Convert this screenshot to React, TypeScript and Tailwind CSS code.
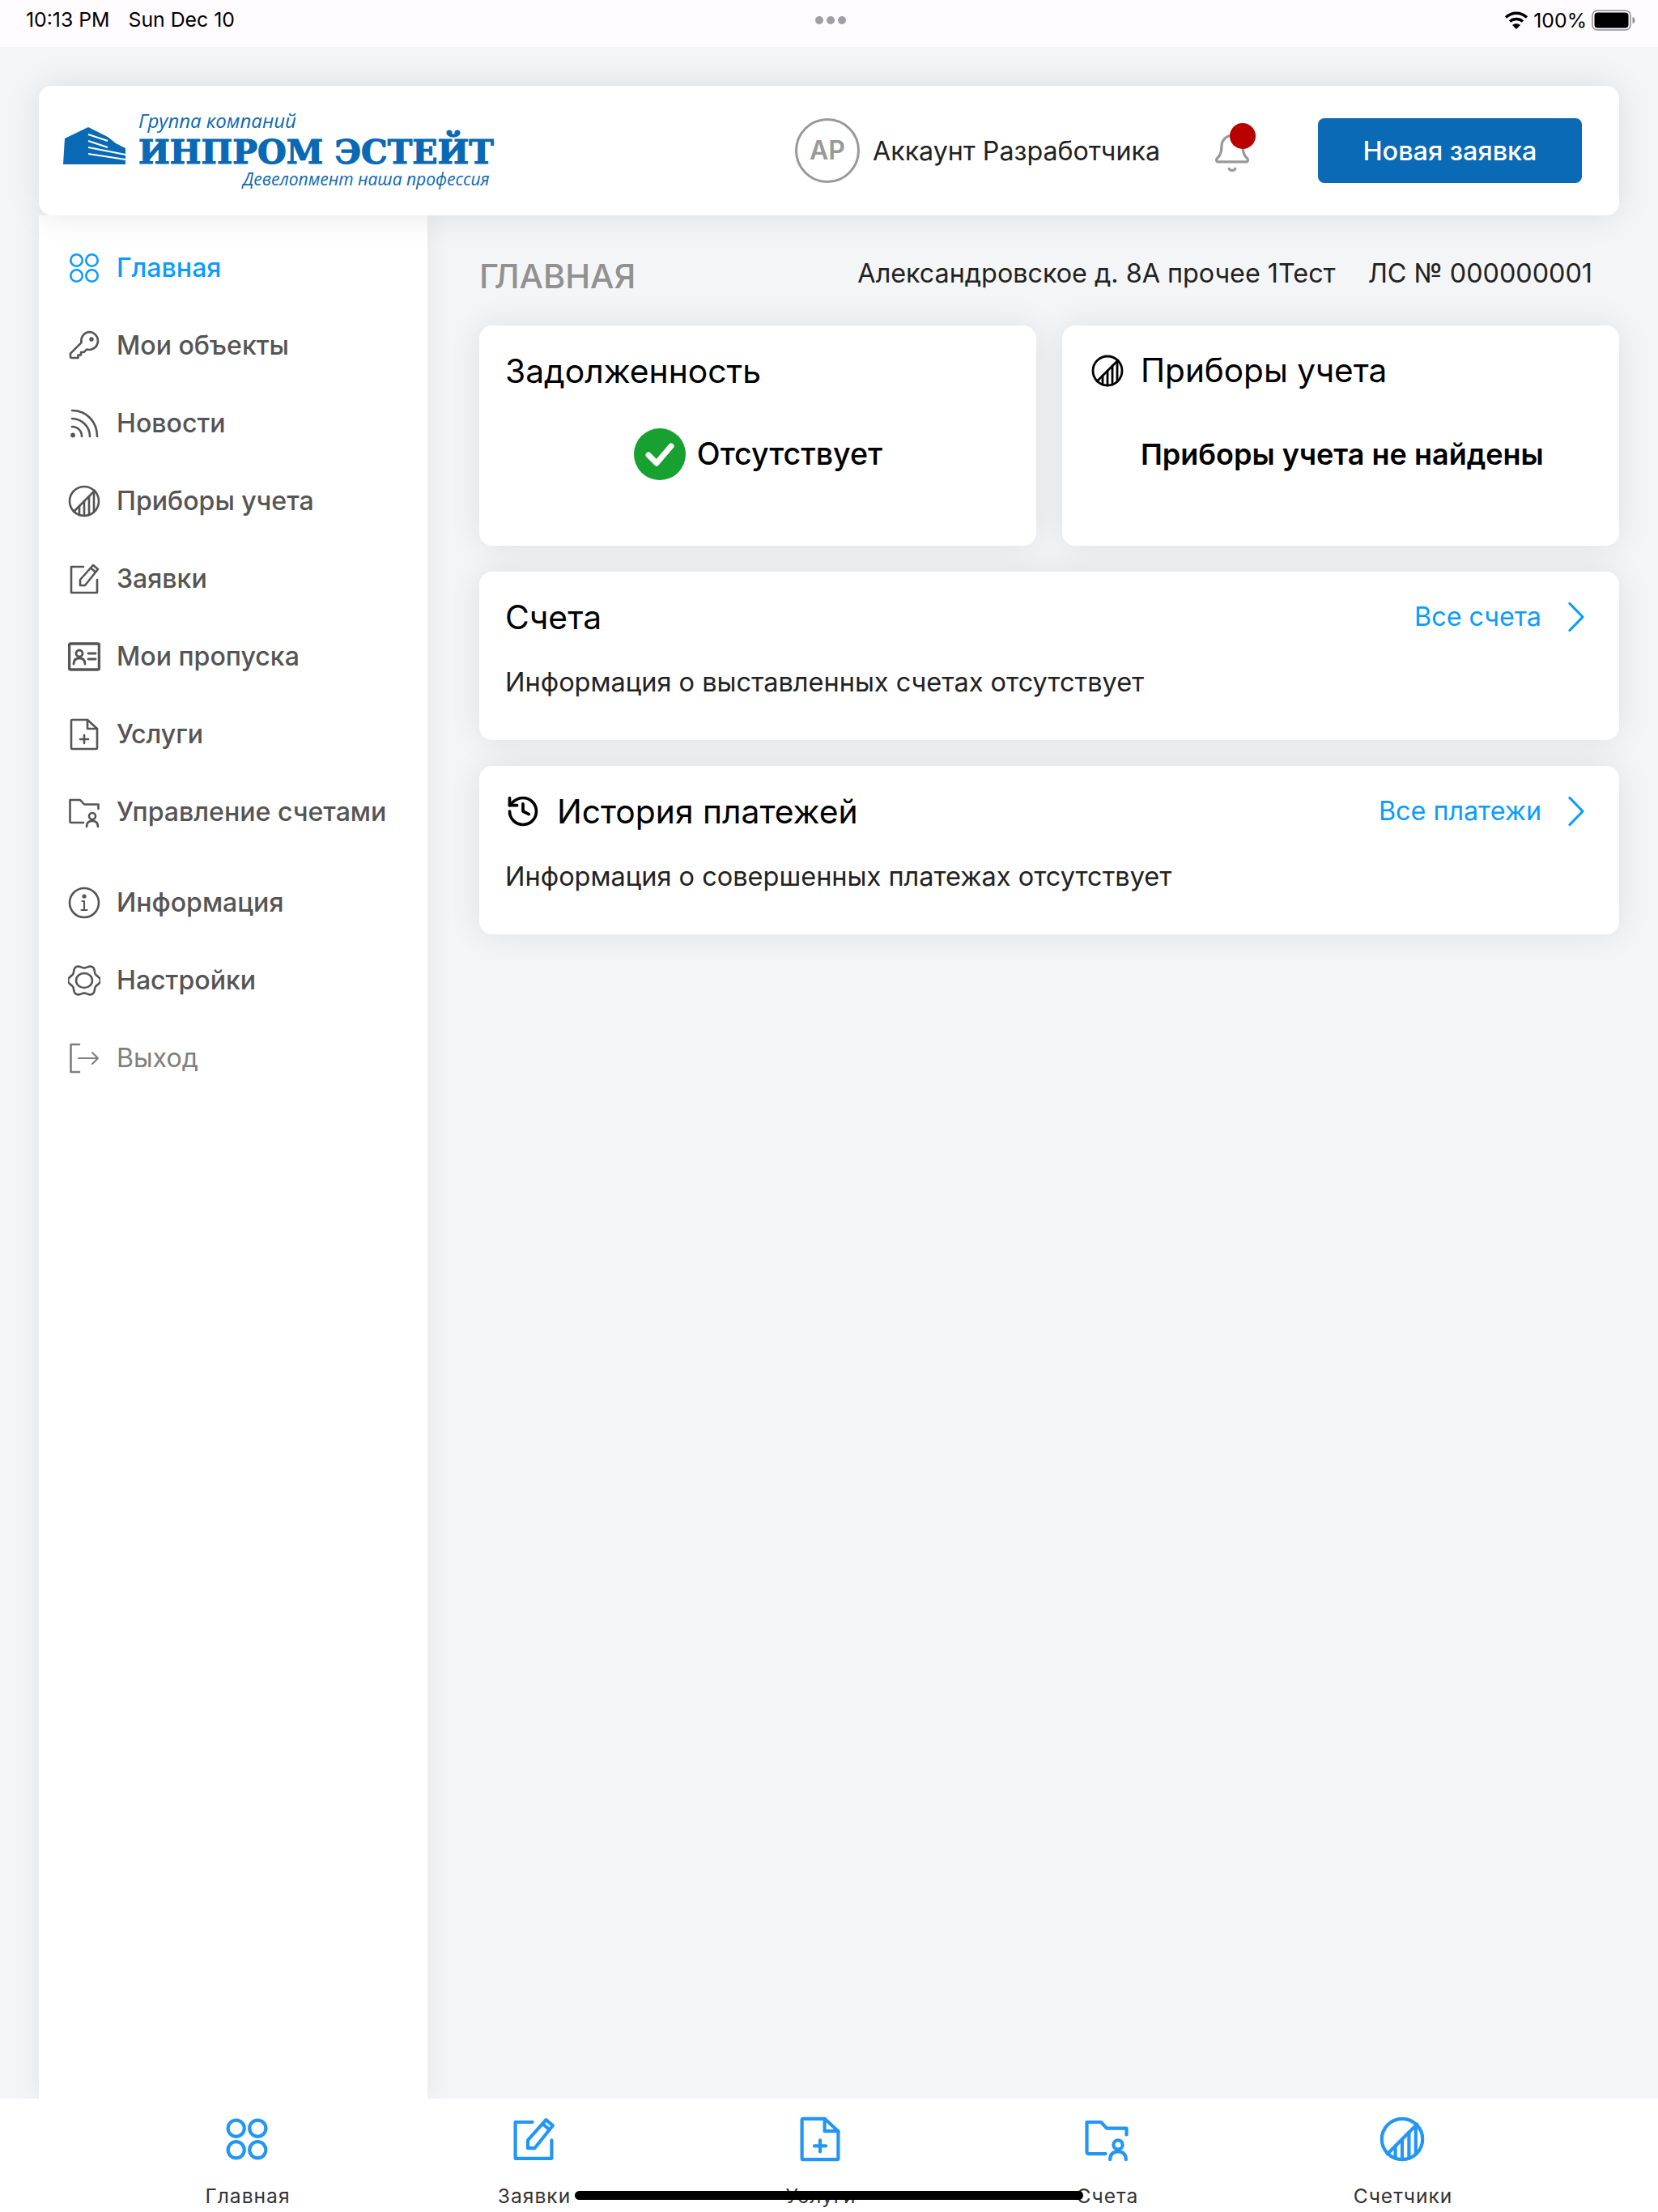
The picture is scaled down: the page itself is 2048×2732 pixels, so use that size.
import React from "react";
import { Bell, History } from "lucide-react";

type IconName = "grid" | "key" | "feed" | "meter" | "edit" | "card" | "file" | "folder" | "info" | "gear" | "logout";

const gearPath = (() => {
  const pts: string[] = [];
  for (let i = 0; i < 96; i++) {
    const t = (i / 96) * Math.PI * 2;
    const r = 18 + 2 * Math.cos(6 * t);
    pts.push(`${(20 + r * Math.cos(t)).toFixed(2)} ${(20 + r * Math.sin(t) * 0.97).toFixed(2)}`);
  }
  return "M" + pts.join("L") + "Z";
})();

function Glyph({ name, size = 40, sw = 2.6 }: { name: IconName; size?: number; sw?: number }) {
  const common = { fill: "none", stroke: "currentColor", strokeWidth: sw, strokeLinecap: "round" as const, strokeLinejoin: "round" as const };
  return (
    <svg width={size} height={size} viewBox="0 0 40 40" {...common}>
      {name === "grid" && (
        <>
          <circle cx="10.5" cy="10.5" r="7.2" />
          <circle cx="29.5" cy="10.5" r="7.2" />
          <circle cx="10.5" cy="29.5" r="7.2" />
          <circle cx="29.5" cy="29.5" r="7.2" />
        </>
      )}
      {name === "key" && (
        <>
          <path d="M26 3a11 11 0 1 1-3 21.6l-3.5 3.4h-3.5v3.5h-3.5v3.5H4.5a1.5 1.5 0 0 1-1.5-1.5v-3.9l13.5-13.5A11 11 0 0 1 26 3z" />
          <circle cx="29" cy="12" r="1.4" fill="currentColor" />
        </>
      )}
      {name === "feed" && (
        <>
          <path d="M5 4C23 4 36 18 36 36" />
          <path d="M5 14C17 14 27 24 27 36" />
          <path d="M5 24C12 24 17 29 17 36" />
          <circle cx="6" cy="34.5" r="1.6" fill="currentColor" />
        </>
      )}
      {name === "meter" && (
        <>
          <circle cx="20" cy="20" r="18" />
          <path d="M7 33 33 7" />
          <path d="M14 26v11M20 20v18M26 14v23M32 8v25" />
        </>
      )}
      {name === "edit" && (
        <>
          <path d="M19 5H4v32h32V21" />
          <path d="M15 28v-7L31 3l6 5-16 20z" />
          <path d="M28 6.5l6 5" />
        </>
      )}
      {name === "card" && (
        <>
          <rect x="1.5" y="4" width="37" height="32" rx="2" strokeWidth={sw * 1.35} />
          <circle cx="14" cy="16" r="4" strokeWidth={sw * 1.1} />
          <path d="M7 29c0-5 3-7 7-7s7 2 7 7" strokeWidth={sw * 1.1} />
          <path d="M25 16h9M25 23h9" strokeWidth={sw * 1.1} />
        </>
      )}
      {name === "file" && (
        <>
          <path d="M24 2H5a1 1 0 0 0-1 1v34a1 1 0 0 0 1 1h30a1 1 0 0 0 1-1V13z" />
          <path d="M24 2v11h12" />
          <path d="M20 21v10M15 26h10" />
        </>
      )}
      {name === "folder" && (
        <>
          <path d="M19 33H4a1.5 1.5 0 0 1-1.5-1.5V5H15l5 5.5h17.5V16" />
          <circle cx="30" cy="25" r="4" />
          <path d="M23 38c0-5 3-7 7-7s7 2 7 7" />
        </>
      )}
      {name === "info" && (
        <>
          <circle cx="20" cy="20" r="18" />
          <circle cx="20" cy="12" r="1.3" fill="currentColor" />
          <path d="M17.5 18H20v11M16.5 29h7" strokeWidth={sw * 0.8} />
        </>
      )}
      {name === "gear" && (
        <>
          <path d={gearPath} />
          <ellipse cx="20" cy="20" rx="10" ry="9" />
        </>
      )}
      {name === "logout" && (
        <>
          <path d="M14 3H3.5v34H14" />
          <path d="M13 20h24M30 13l7 7-7 7" strokeWidth={sw * 0.8} />
        </>
      )}
    </svg>
  );
}

function NavItem({ icon, label, active, muted, extra }: { icon: IconName; label: string; active?: boolean; muted?: boolean; extra?: boolean }) {
  const color = active ? "text-[#0a9cff]" : muted ? "text-[#7f7f7f]" : "text-[#555555]";
  return (
    <div className={`flex h-[96px] items-center gap-[20px] pl-[36px] ${extra ? "mt-[16px]" : ""} ${color}`}>
      <Glyph name={icon} />
      <span className={`text-[32.1px] leading-none ${muted ? "font-normal" : "font-medium"}`}>{label}</span>
    </div>
  );
}

function Tab({ icon, label, last }: { icon: IconName; label: string; last?: boolean }) {
  return (
    <div className={`flex w-[354px] flex-col items-center pt-[22px] ${last ? "ml-[11px]" : ""}`}>
      <div className="text-[#2396f3]">
        <Glyph name={icon} size={56} sw={3} />
      </div>
      <span className="ml-[2px] mt-[27px] text-[24.6px] leading-[30px] tracking-[1px] text-[#333333]">{label}</span>
    </div>
  );
}

function Card({ children, className }: { children: React.ReactNode; className: string }) {
  return <div className={`rounded-[16px] bg-white shadow-[0_0_40px_rgba(0,0,0,0.09)] ${className}`}>{children}</div>;
}

function LinkRow({ label }: { label: string }) {
  return (
    <div className="flex items-center gap-[32px] text-[#0a9cff]">
      <span className="text-[32.3px] leading-none">{label}</span>
      <svg width="22" height="38" viewBox="0 0 22 38" fill="none" stroke="currentColor" strokeWidth="3.2" strokeLinecap="round" strokeLinejoin="round">
        <path d="M3 2.500 19 19 3 35.500" />
      </svg>
    </div>
  );
}

export default function App() {
  return (
    <div className="relative flex h-[2732px] w-[2048px] flex-col overflow-hidden bg-[#f4f5f7] font-['Inter',sans-serif] text-black">
      <div className="flex h-[58px] items-center justify-between bg-[#fffbff] pb-[8px] pl-[32px] pr-[28px] text-[24.8px] text-black">
        <div className="flex w-[400px] gap-[23px]">
          <span>10:13 PM</span>
          <span>Sun Dec 10</span>
        </div>
        <div className="flex gap-[4px]">
          <span className="h-[10px] w-[10px] rounded-full bg-[#a39ea3]" />
          <span className="h-[10px] w-[10px] rounded-full bg-[#a39ea3]" />
          <span className="h-[10px] w-[10px] rounded-full bg-[#a39ea3]" />
        </div>
        <div className="flex w-[400px] items-center justify-end gap-[6px]">
          <svg width="30" height="24" viewBox="0 0 30 24" fill="none" stroke="black" strokeWidth="3.4">
            <path d="M2 8.5C9.5 1.5 20.5 1.500 28 8.5" />
            <path d="M7 13.5C11.5 9.5 18.5 9.5 23 13.5" />
            <path d="M15 23l-5-5c3-2.5 7-2.5 10 0z" fill="black" stroke="none" />
          </svg>
          <span className="leading-none">100%</span>
          <svg width="54" height="26" viewBox="0 0 54 26">
            <rect x="1" y="1" width="47" height="24" rx="6" fill="none" stroke="#8e8e8e" strokeWidth="1.5" />
            <rect x="3.5" y="3.5" width="42" height="19" rx="4" fill="black" />
            <path d="M50.5 9c2 .5 3 2 3 4s-1 3.500-3 4z" fill="#8e8e8e" />
          </svg>
        </div>
      </div>

      <div className="flex min-h-0 flex-1 flex-col pl-[48px] pr-[48px] pt-[48px]">
        <header className="relative z-20 flex h-[160px] rounded-[16px] bg-white pl-[30px] pr-[46px] shadow-[0_0_40px_rgba(0,0,0,0.1)]">
          <svg width="78" height="46" viewBox="0 0 78 46" className="mt-[51px] shrink-0">
            <path d="M2 14 31 0l24 12 10 8 12 6v20H0z" fill="#0a69b4" />
            <path d="M31 9l24 8M31 17l24 8M31 25l46 9M31 33l46 7" stroke="#fff" strokeWidth="2" />
          </svg>
          <div className="ml-[15px] flex w-[440px] flex-col pt-[30px] text-[#0a69b4]">
            <span className="font-['Open_Sans',sans-serif] text-[24px] italic leading-[26px]">Группа компаний</span>
            <span className="mt-[4px] whitespace-nowrap font-['DejaVu_Serif',serif] text-[41px] font-bold leading-[44px] [-webkit-text-stroke:1.2px_#0a69b4]">ИНПРОМ ЭСТЕЙТ</span>
            <span className="ml-[129px] mt-[-1px] whitespace-nowrap font-['Open_Sans',sans-serif] text-[21px] italic leading-[24px]">Девелопмент наша профессия</span>
          </div>

          <div className="ml-auto flex items-center gap-[16px]">
            <div className="flex h-[80px] w-[80px] items-center justify-center rounded-full border-[3px] border-[#999999] text-[32px] font-semibold text-[#999999]">AP</div>
            <span className="mt-[2px] text-[32.2px] leading-none text-[#222222]">Аккаунт Разработчика</span>
          </div>
          <div className="relative ml-[63px] mr-[80px] mt-[40px] flex h-[80px] w-[52px] items-center justify-center text-[#999999]">
            <Bell size={56} strokeWidth={1.5} className="mt-[6px]" />
            <span className="absolute left-[23px] top-[6px] h-[32px] w-[32px] rounded-full bg-[#b90000]" />
          </div>
          <button className="mt-[40px] flex h-[80px] w-[326px] items-center justify-center rounded-[8px] bg-[#0a6ab5] pt-[2px] text-[32.4px] font-medium text-white">Новая заявка</button>
        </header>

        <div className="flex min-h-0 flex-1">
          <aside className="relative z-10 w-[480px] bg-white pt-[17px] shadow-[0_0_30px_rgba(0,0,0,0.08)]">
            <NavItem icon="grid" label="Главная" active />
            <NavItem icon="key" label="Мои объекты" />
            <NavItem icon="feed" label="Новости" />
            <NavItem icon="meter" label="Приборы учета" />
            <NavItem icon="edit" label="Заявки" />
            <NavItem icon="card" label="Мои пропуска" />
            <NavItem icon="file" label="Услуги" />
            <NavItem icon="folder" label="Управление счетами" />
            <NavItem icon="info" label="Информация" extra />
            <NavItem icon="gear" label="Настройки" />
            <NavItem icon="logout" label="Выход" muted />
          </aside>

          <main className="flex min-w-0 flex-1 flex-col pl-[64px]">
            <div className="flex h-[136px] justify-between pr-[33px]">
              <span className="mt-[55px] text-[41.5px] font-medium leading-none text-[#919191]">ГЛАВНАЯ</span>
              <div className="mt-[56px] flex gap-[40px] text-[32.3px] leading-none text-[#222222]">
                <span>Александровское д. 8А прочее 1Тест</span>
                <span>ЛС № 000000001</span>
              </div>
            </div>

            <div className="flex flex-col gap-[32px]">
              <div className="grid grid-cols-2 gap-[32px]">
                <Card className="h-[272px] px-[32px] pt-[28px]">
                  <h2 className="text-[40.8px] font-normal leading-[56px]">Задолженность</h2>
                  <div className="mt-[43px] flex items-center justify-center gap-[14px] pl-[1px]">
                    <svg width="64" height="64" viewBox="0 0 64 64">
                      <circle cx="32" cy="32" r="32" fill="#18a030" />
                      <path d="M18 33l10 10 18-21" fill="none" stroke="#fff" strokeWidth="7" strokeLinecap="round" strokeLinejoin="round" />
                    </svg>
                    <span className="text-[37.6px] font-medium leading-none">Отсутствует</span>
                  </div>
                </Card>
                <Card className="h-[272px] px-[36px] pt-[28px]">
                  <div className="flex items-center gap-[21px]">
                    <Glyph name="meter" sw={2.8} />
                    <h2 className="text-[40.5px] font-normal leading-[56px]">Приборы учета</h2>
                  </div>
                  <div className="mt-[43px] flex h-[64px] items-center pl-[61px] text-[36px] font-semibold leading-none">Приборы учета не найдены</div>
                </Card>
              </div>

              <Card className="h-[208px] pl-[32px] pr-[42px] pt-[28px]">
                <div className="flex h-[56px] items-center justify-between">
                  <h2 className="text-[40.8px] font-normal leading-none">Счета</h2>
                  <LinkRow label="Все счета" />
                </div>
                <p className="mt-[33px] text-[32.5px] leading-[40px] text-[#222222]">Информация о выставленных счетах отсутствует</p>
              </Card>

              <Card className="h-[208px] pl-[32px] pr-[42px] pt-[28px]">
                <div className="flex h-[56px] items-center justify-between">
                  <div className="flex items-center gap-[20px]">
                    <History size={44} strokeWidth={2} />
                    <h2 className="text-[40.8px] font-normal leading-none">История платежей</h2>
                  </div>
                  <LinkRow label="Все платежи" />
                </div>
                <p className="mt-[33px] text-[32.5px] leading-[40px] text-[#222222]">Информация о совершенных платежах отсутствует</p>
              </Card>
            </div>
          </main>
        </div>
      </div>

      <nav className="relative z-30 flex h-[140px] bg-white pl-[128px]">
        <Tab icon="grid" label="Главная" />
        <Tab icon="edit" label="Заявки" />
        <Tab icon="file" label="Услуги" />
        <Tab icon="folder" label="Счета" />
        <Tab icon="meter" label="Счетчики" last />
      </nav>
      <div className="absolute left-[710px] top-[2706px] z-40 h-[11px] w-[628px] rounded-full bg-black" />
    </div>
  );
}
